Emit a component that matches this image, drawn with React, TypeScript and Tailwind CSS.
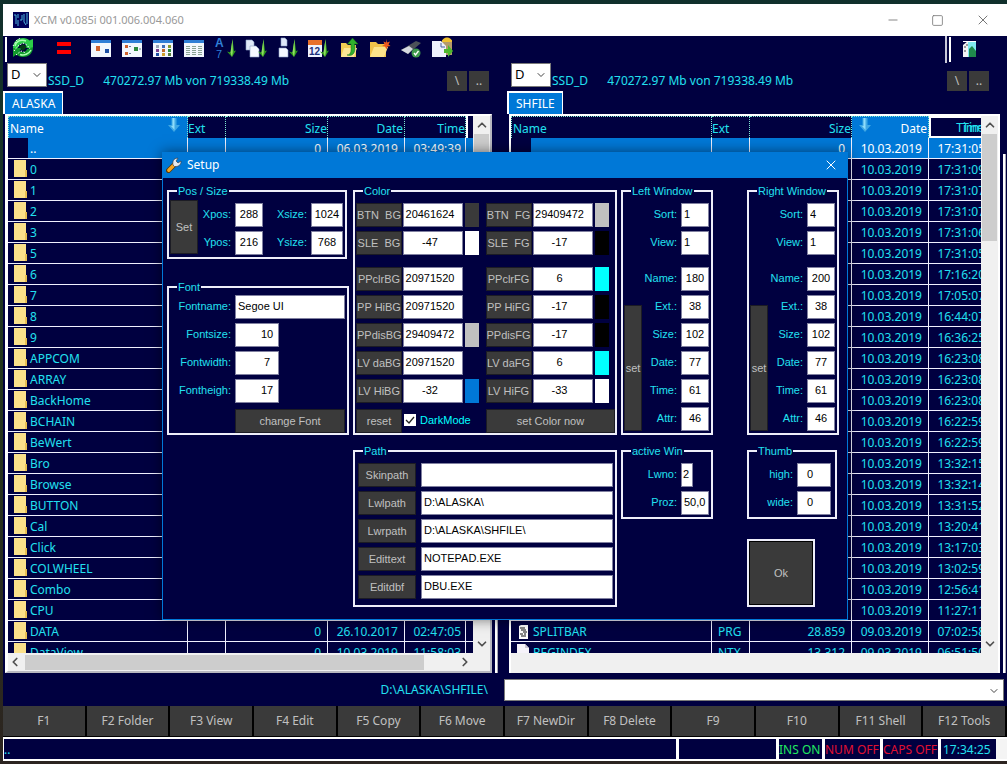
import { useId, type ReactNode } from 'react';
import { ChevronDown, ChevronLeft, ChevronRight, ChevronUp, Minus, Square, X } from 'lucide-react';

type Row = {
   icon?: 'folder' | 'prg' | 'file';
   name: string;
   ext?: string;
   size?: string;
   date?: string;
   time?: string;
};

const folder = (name: string): Row => ({ icon: 'folder', name });
const entry = (time: string): Row => ({ name: '', date: '10.03.2019', time });

const leftRows: Row[] = [
   { name: '..', size: '0', date: '06.03.2019', time: '03:49:39' },
   ...['0', '1', '2', '3', '5', '6', '7', '8', '9', 'APPCOM', 'ARRAY', 'BackHome', 'BCHAIN', 'BeWert', 'Bro',
      'Browse', 'BUTTON', 'Cal', 'Click', 'COLWHEEL', 'Combo', 'CPU'].map(folder),
   { icon: 'folder', name: 'DATA', size: '0', date: '26.10.2017', time: '02:47:05' },
   { icon: 'folder', name: 'DataView', size: '0', date: '10.03.2019', time: '11:58:03' }
];

const rightRows: Row[] = [
   { name: '', size: '0', date: '10.03.2019', time: '17:31:05' },
   ...['17:31:09', '17:31:07', '17:31:07', '17:31:06', '17:31:05', '17:16:20', '17:05:07', '16:44:07', '16:36:25',
      '16:23:08', '16:23:08', '16:23:08', '16:22:59', '16:22:59', '13:32:15', '13:32:14', '13:31:52', '13:20:41',
      '13:17:03', '13:02:59', '12:56:41', '11:27:11'].map(entry),
   { icon: 'prg', name: 'SPLITBAR', ext: 'PRG', size: '28.859', date: '09.03.2019', time: '07:02:58' },
   { icon: 'file', name: 'REGINDEX', ext: 'NTX', size: '13.312', date: '09.03.2019', time: '06:51:50' }
];

// label, value, swatch class
const colorRows = [
   [['BTN  BG', '20461624', 'bg-[#3a3a3a]'], ['BTN  FG', '29409472', 'bg-[#c0c0c0]']],
   [['SLE  BG', '-47', 'bg-white'], ['SLE  FG', '-17', 'bg-black']],
   [['PPclrBG', '20971520', ''], ['PPclrFG', '6', 'bg-[#00ffff]']],
   [['PP HiBG', '20971520', ''], ['PP HiFG', '-17', 'bg-black']],
   [['PPdisBG', '29409472', 'bg-[#c0c0c0]'], ['PPdisFG', '-17', 'bg-black']],
   [['LV daBG', '20971520', ''], ['LV daFG', '6', 'bg-[#00ffff]']],
   [['LV HiBG', '-32', 'bg-[#0078d7]'], ['LV HiFG', '-33', 'bg-white']]
];

const paths = [
   ['Skinpath', ''],
   ['Lwlpath', 'D:\\ALASKA\\'],
   ['Lwrpath', 'D:\\ALASKA\\SHFILE\\'],
   ['Edittext', 'NOTEPAD.EXE'],
   ['Editdbf', 'DBU.EXE']
];

const functionKeys = ['F1', 'F2 Folder', 'F3 View', 'F4 Edit', 'F5 Copy', 'F6 Move', 'F7 NewDir', 'F8 Delete',
   'F9', 'F10', 'F11 Shell', 'F12 Tools'];

/* ---------- icons ---------- */

const Icon = ({ children }: { children: ReactNode }) => (
   <svg width="22" height="22" viewBox="0 0 22 22">{children}</svg>
);

const SortArrow = () => (
   <>
      <path d="M18.500 2 L20 14 L22 13.500 L18 20 L13 14.500 L16.500 15.500 Z" fill="#2f9a1c" />
      <path d="M18.500 2 L18.800 15 L18 20 L16.500 15.500 Z" fill="#8fe060" />
   </>
);

const ViewFrame = ({ children }: { children: ReactNode }) => (
   <Icon>
      <rect x="1" y="3" width="20" height="17" fill="#f2f7fd" />
      <rect x="1" y="3" width="20" height="3" fill="#2f7fd6" />
      {children}
   </Icon>
);

const RefreshIcon = () => (
   <Icon>
      <path d="M1 11 C1 4 6 1 11 1 C14 1 16 2 17.500 3.500 L21 2 V11 H12 L14.500 7.500 C12 5.500 8 6 7 9 L4 13 Z" fill="#2ccc48" />
      <path d="M21 10 C21 17 16 20 11 20 C8 20 6 19 4.500 17.500 L1 20 V11 H10 L7.500 14 C10 16 14 15 15 12 Z" fill="#119a2c" />
      <path d="M3 9 C4 4 9 2 14 4 M8 17.500 C12 19 17 17 19 13" stroke="#a8ffb0" strokeWidth="1.500" fill="none" />
      <path d="M1 9 L5 3 L9 1 M2 14 L6 9 L11 6 L15 8 L18 12 M4 18 L9 14 L14 16" stroke="#fff" strokeDasharray="1.500 1.500" fill="none" />
      <path d="M7 10 L11 7 L15 10 L11 14 Z" fill="#053a14" />
   </Icon>
);

const EqualsIcon = () => (
   <Icon>
      <rect x="4" y="5" width="14" height="4" fill="#f00" />
      <rect x="4" y="13" width="14" height="4" fill="#f00" />
   </Icon>
);

const LargeIconsIcon = () => (
   <ViewFrame>
      <rect x="6" y="9" width="4" height="5" fill="#d0622c" />
      <rect x="15" y="12" width="4" height="4" fill="#1d4fa3" />
   </ViewFrame>
);

const SmallIconsIcon = () => (
   <ViewFrame>
      <rect x="4" y="8" width="3" height="3" fill="#d0622c" />
      <rect x="13" y="10" width="4" height="4" fill="#2c8a3c" />
      <rect x="4" y="15" width="3" height="3" fill="#d0622c" />
      <path d="M8 9.500h2 M18 12h2 M8 16.500h2" stroke="#6a7d96" />
   </ViewFrame>
);

const TilesIcon = () => (
   <ViewFrame>
      {['#9aa7b8', '#3f6fb8', '#8a9a2c', '#7a3f8a', '#c06a2c', '#2c8a3c', '#1d4fa3', '#d0a02c', '#5a7d3c'].map((c, i) => (
         <rect key={i} x={4 + (i % 3) * 6} y={8 + Math.floor(i / 3) * 4} width="3" height="3" fill={c} />
      ))}
   </ViewFrame>
);

const DetailsIcon = () => (
   <ViewFrame>
      {[9, 11, 13, 15, 17].map(y => (
         <path key={y} d={`M3 ${y}.500h4 M9 ${y}.500h4 M15 ${y}.500h4`} stroke="#8aa394" />
      ))}
   </ViewFrame>
);

const SortNameIcon = () => (
   <Icon>
      <text x="1" y="10" fontSize="12" fontWeight="bold" fill="#2f7fd6" fontFamily="Liberation Sans">A</text>
      <text x="2" y="21" fontSize="11" fill="#2f7fd6" fontFamily="Liberation Sans">7</text>
      <SortArrow />
   </Icon>
);

const SortExtIcon = () => (
   <Icon>
      <path d="M1 3h6l2 2v8H1z" fill="#dfe8f8" stroke="#8fa3c8" strokeWidth=".6" />
      <path d="M5 9h6l3 3v8H5z" fill="#f5f8ff" stroke="#8fa3c8" strokeWidth=".6" />
      <SortArrow />
   </Icon>
);

const SortSizeIcon = () => (
   <Icon>
      <path d="M5 1h4l2 2v6H5z" fill="#dfe8f8" stroke="#8fa3c8" strokeWidth=".6" />
      <path d="M3 11h7l2 2v7H3z" fill="#f5f8ff" stroke="#8fa3c8" strokeWidth=".6" />
      <SortArrow />
   </Icon>
);

const SortDateIcon = () => (
   <Icon>
      <rect x="1" y="3" width="14" height="17" fill="#eef3ff" />
      <rect x="1" y="3" width="14" height="5" fill="#e8702c" />
      <text x="2" y="18" fontSize="10" fontWeight="bold" fill="#1b2f7a" fontFamily="Liberation Sans">12</text>
      <SortArrow />
   </Icon>
);

const FolderUpIcon = () => (
   <Icon>
      <path d="M3 6h5l2 2h8v12H3z" fill="#f0cc54" />
      <path d="M6 11h13l-3 9H3z" fill="#fbe796" />
      <path d="M9 18 C14 18 13 12 13 7 H9.500 L14.500 1 L20 7 H16.500 C18 14 16 20 9 18 Z" fill="#2fb02c" stroke="#146a14" strokeWidth=".5" />
   </Icon>
);

const NewFolderIcon = () => (
   <Icon>
      <path d="M1 5h6l2 2h8v13H1z" fill="#f0c24a" />
      <path d="M5 10h14l-4 10H1z" fill="#fde48a" />
      <path d="M17 2l1 3.500 3-1-1.500 3 2 1.500-3 .5-1 3-1.500-3-3-.5 2.500-1.500-1-3 2.500 1z" fill="#f05a1c" />
   </Icon>
);

const DriveIcon = () => (
   <Icon>
      <path d="M1 13 L16 4 L21 6 L8 17 Z" fill="#4c5158" />
      <path d="M1 13 L9 9 L13 12 L8 17 Z" fill="#d5d9df" />
      <circle cx="16" cy="16" r="4.500" fill="#3e9a4c" />
      <path d="M14 16l1.500 2 3-4" stroke="#fff" strokeWidth="1.300" fill="none" />
   </Icon>
);

const PasteIcon = () => (
   <Icon>
      <path d="M11 3h10v15H11z" fill="#b49a6a" />
      <path d="M11 5 C11 -1 21 -1 21 5 Z" fill="#f0c030" />
      <path d="M1 4h9l5 5v11H1z" fill="#eef1fb" />
      <path d="M10 6v4h4" fill="none" stroke="#4a5f9a" />
      <path d="M13 12h4V8l5 6-5 6v-4h-4z" fill="#4db82c" />
   </Icon>
);

const ExitIcon = () => (
   <Icon>
      <path d="M4 8l5-4v16H4z" fill="#f4f4f4" />
      <path d="M6 9v2 M6 13v2 M8 7v2" stroke="#444" />
      <rect x="9" y="4" width="8" height="16" fill="#7fe9ef" />
      <path d="M10 20V12l3-3 4 5v6z" fill="#1f8a4c" />
      <path d="M4 4.500h13" stroke="#fff" />
   </Icon>
);

const SortedMark = () => (
   <svg width="14" height="16" viewBox="0 0 14 16">
      <path d="M4.500 1h5v7H13l-6 7-6-7h3.500z" fill="#3fa8e4" />
      <path d="M5.500 1h2v12L4 9h1.500z" fill="#8fdcfa" />
   </svg>
);

const WrenchIcon = () => (
   <svg width="16" height="16" viewBox="0 0 16 16">
      <path d="M2.500 13.500 L8 8" stroke="#5a3a08" strokeWidth="5" strokeLinecap="round" />
      <path d="M2.800 13.200 L8 8" stroke="#f5a623" strokeWidth="3.400" strokeLinecap="round" />
      <path d="M7 8 C6 3 9 .8 12 1.200 L10 4 L12 6 L15 4 C15.500 7 13 10 8.500 9.500 Z" fill="#e4e9ef" stroke="#39424e" strokeWidth=".7" />
   </svg>
);

const AppIcon = () => (
   <svg width="16" height="16" viewBox="0 0 16 16">
      <rect width="16" height="16" fill="#00005a" />
      <path d="M1 3h2v9 M5 2v4 M5 8v6 M7 8h2V3 M11 2v8l2 3 M14 1v11" stroke="#4fb4dc" fill="none" />
   </svg>
);

function RowIcon ({ kind }: { kind?: Row['icon'] }) {
   if (kind === 'folder') {
      return (
         <svg className="mt-px ml-1.5" width="13" height="17" viewBox="0 0 13 17">
            <path d="M0 0h12v10h1v7H0z" fill="#fbe08a" />
            <path d="M11 10h2v7h-2z" fill="#e8bf52" />
         </svg>
      );
   }
   if (kind === 'prg') {
      return (
         <svg className="mt-1 ml-2" width="9" height="14" viewBox="0 0 9 14">
            <path d="M0 1l2-1h7v14H0z" fill="#fff" />
            <path d="M1 3h5 M2 5h5 M4 7h4 M1 9h3 M5 9h2 M2 11h5" stroke="#111" />
         </svg>
      );
   }
   if (kind === 'file') {
      return (
         <svg className="mt-0.5 ml-1.5" width="12" height="16" viewBox="0 0 12 16">
            <path d="M0 0h8l4 4v12H0z" fill="#f6f3fa" />
            <path d="M8 0v4h4z" fill="#c9c4d4" />
         </svg>
      );
   }
   return null;
}

/* ---------- file panes ---------- */

const toolGroup = [
   ['Large icons', <LargeIconsIcon />], ['Small icons', <SmallIconsIcon />], ['Tiles', <TilesIcon />],
   ['Details', <DetailsIcon />], ['Sort by name', <SortNameIcon />], ['Sort by ext', <SortExtIcon />],
   ['Sort by size', <SortSizeIcon />], ['Sort by date', <SortDateIcon />], ['Folder up', <FolderUpIcon />],
   ['New folder', <NewFolderIcon />], ['Drive', <DriveIcon />], ['Paste', <PasteIcon />]
] as const;

function ToolButton ({ title, children }: { title: string; children: ReactNode }) {
   return (
      <button aria-label={title} className="flex justify-center items-start w-[31px] h-[25px]">{children}</button>
   );
}

function Toolbar () {
   return (
      <div className="flex items-center h-[27px] shrink-0 pl-0.5">
         <div className="bg-white w-0.5 h-[25px]" />
         <ToolButton title="Refresh"><RefreshIcon /></ToolButton>
         <div className="ml-2.5"><ToolButton title="Compare"><EqualsIcon /></ToolButton></div>
         <div className="flex ml-1.5">
            {toolGroup.map(([title, icon]) => <ToolButton key={title} title={title}>{icon}</ToolButton>)}
         </div>
         <div className="bg-[#c8c8d8] ml-auto w-0.5 h-[27px]" />
         <div className="bg-white mr-[3px] ml-0.5 w-0.5 h-[25px]" />
         <div className="mr-[22px]"><ToolButton title="Exit"><ExitIcon /></ToolButton></div>
      </div>
   );
}

function DriveBar () {
   return (
      <div className="flex h-7 shrink-0 pl-1 pr-[18px]">
         <div className="relative w-10 h-6">
            <select aria-label="Drive" className="bg-white pl-[3px] border border-[#7a7a7a] w-full h-full text-black text-[13px] appearance-none">
               <option>D</option>
            </select>
            <ChevronDown size={12} className="top-1.5 right-1 absolute text-[#444] pointer-events-none" />
         </div>
         <p className="mt-2 ml-px leading-5"><span className="mr-4">SSD_D</span> 470272.97 Mb von 719338.49 Mb</p>
         <button className="bg-[#3a3a3a] mt-2 ml-auto w-5 h-5 text-[#c0c0c0]">\</button>
         <button className="bg-[#3a3a3a] mt-2 ml-0.5 w-5 h-5 text-[#c0c0c0]">..</button>
      </div>
   );
}

function VScroll ({ thumb }: { thumb: string }) {
   return (
      <div className="flex flex-col bg-[#f0f0f0] w-[17px] text-[#505050] shrink-0">
         <ChevronUp size={14} strokeWidth={3} className="mx-auto my-0.5 shrink-0" />
         <div className={`bg-[#cdcdcd] mx-px ${thumb}`} />
         <ChevronDown size={14} strokeWidth={3} className="mx-auto mt-auto mb-0.5 shrink-0" />
      </div>
   );
}

function FileTable ({ rows, nameCol, sorted }: { rows: Row[]; nameCol: string; sorted: 'name' | 'date' }) {
   const head = 'h-[22px] p-0 pt-[3px] font-normal leading-4 border-r border-dotted border-[#7fe8d0] overflow-hidden';
   const active = 'bg-[#0078d7] text-white';
   const cell = 'h-[21px] p-0 border-r border-b border-[#f0f0ff] leading-[19px] overflow-hidden whitespace-nowrap';

   return (
      <table className="border-separate border-spacing-0 w-[524px] table-fixed">
         <colgroup>
            <col className={nameCol} />
            <col className="w-[38px]" />
            <col className="w-[102px]" />
            <col className="w-[77px]" />
            <col className="w-[61px]" />
            <col />
         </colgroup>
         <thead>
            <tr>
               <th className={`${head} border-t border-l text-left ${sorted === 'name' ? active : ''}`}>
                  <div className="flex justify-between h-4 pl-px">
                     Name
                     {sorted === 'name' && <span className="mr-1.5 -mt-1"><SortedMark /></span>}
                  </div>
               </th>
               <th className={`${head} border-t text-left`}>Ext</th>
               <th className={`${head} border-t text-right`}>Size</th>
               <th className={`${head} border-t text-right ${sorted === 'date' ? active : ''}`}>
                  <div className="flex justify-end h-4 pr-px">
                     {sorted === 'date' && <span className="mr-auto ml-1.5 -mt-1"><SortedMark /></span>}
                     Date
                  </div>
               </th>
               {sorted === 'date' ? (
                  <th className="relative p-0 pt-0.5 border-2 border-white h-[22px] font-normal text-right leading-4">
                     <span className="pr-1">Time</span>
                     {/* the focused column paints its caption twice */}
                     <span className="top-0.5 -right-0.5 absolute">Time</span>
                  </th>
               ) : (
                  <th className={`${head} border-t text-right`}>Time</th>
               )}
               <th className="p-0 border-white border-l-2" />
            </tr>
         </thead>
         <tbody>
            {rows.map((row, i) => {
               const tone = i === 0 ? 'bg-[#0078d7] text-white' : '';
               return (
                  <tr key={i}>
                     <td className={`${cell} ${tone}`}>
                        <div className="flex items-start h-5">
                           <span className="flex bg-[#000040] w-5 h-5 shrink-0"><RowIcon kind={row.icon} /></span>
                           <span className="pt-px pl-0.5">{row.name}</span>
                        </div>
                     </td>
                     <td className={`${cell} ${tone} pt-px pl-1.5`}>{row.ext}</td>
                     <td className={`${cell} ${tone} pt-px pr-1.5 text-right`}>{row.size}</td>
                     <td className={`${cell} ${tone} pt-px pr-1.5 text-right`}>{row.date}</td>
                     <td className={`${cell} ${tone} pt-px pr-1 text-right`}>{row.time}</td>
                     <td className={`${cell} ${tone}`} />
                  </tr>
               );
            })}
         </tbody>
      </table>
   );
}

function Pane ({ tab, children }: { tab: string; children: ReactNode }) {
   return (
      <section className="flex flex-col min-w-0 min-h-0">
         <DriveBar />
         <div className="flex h-[23px] shrink-0">
            <button className="bg-[#0078d7] px-[7px] border-white border-t-2 border-r border-l-2 text-white">{tab}</button>
         </div>
         <div className="flex flex-1 min-h-0">{children}</div>
      </section>
   );
}

const Splitter = () => <div className="bg-[#a8a8b4] mt-10 border-white border-l-2 w-[3px]" />;

/* ---------- setup dialog ---------- */

const grayButton = 'bg-[#3a3a3a] border border-[#1c1c24] text-[#c0c0c0] whitespace-pre';
const inputBase = 'bg-white border border-[#8080a0] h-6 pb-0.5 text-black outline-none shrink-0';

function Group ({ title, className = '', children }: { title: string; className?: string; children: ReactNode }) {
   return (
      <fieldset className={`border-2 border-[#eeeefa] min-w-0 ${className}`}>
         <legend className="ml-2 px-px leading-[14px]">{title}</legend>
         {children}
      </fieldset>
   );
}

function Field ({ label, value, input, row = '' }: { label: string; value: string; input: string; row?: string }) {
   const id = useId();
   return (
      <div className={`flex justify-end items-center h-6 ${row}`}>
         <label htmlFor={id} className="mr-1 pb-0.5">{label}</label>
         <input id={id} defaultValue={value} className={`${inputBase} ${input}`} />
      </div>
   );
}

function WindowGroup ({ title, sort, name }: { title: string; sort: string; name: string }) {
   return (
      <Group title={title}>
         <div className="flex justify-between pt-[5px] pr-0.5 pb-0.5 pl-px">
            <button className={`${grayButton} self-end w-[18px] h-[126px]`}>set</button>
            <div className="flex flex-col gap-1">
               <Field label="Sort:" value={sort} input="w-7 pl-0.5" />
               <Field label="View:" value="1" input="w-7 pl-0.5" />
               <Field label="Name:" value={name} input="w-7 text-center" row="mt-2" />
               <Field label="Ext.:" value="38" input="w-7 text-center" />
               <Field label="Size:" value="102" input="w-7 text-center" />
               <Field label="Date:" value="77" input="w-7 text-center" />
               <Field label="Time:" value="61" input="w-7 text-center" />
               <Field label="Attr:" value="46" input="w-7 text-center" />
            </div>
         </div>
      </Group>
   );
}

function ColorGroup () {
   return (
      <Group title="Color">
         <div className="flex flex-col gap-1 pt-[5px] pl-px">
            {colorRows.map((pair, i) => (
               <div key={i} className={`flex h-6 ${i === 2 ? 'mt-2' : ''}`}>
                  {pair.map(([label, value, swatch]) => (
                     <div key={label} className="flex w-[130px]">
                        <button className={`${grayButton} w-[46px]`}>{label}</button>
                        <input aria-label={label} defaultValue={value} className={`${inputBase} ml-px w-[60px] pr-1.5 text-center`} />
                        <span className={`ml-0.5 w-3.5 ${swatch}`} />
                     </div>
                  ))}
               </div>
            ))}
            <div className="flex mt-0.5 h-6">
               <button className={`${grayButton} w-[46px]`}>reset</button>
               <label className="flex items-center gap-1 pb-0.5 pl-0.5 w-[84px] text-[#00ffff]">
                  <span className="relative w-3 h-3">
                     <input type="checkbox" defaultChecked className="block bg-white w-3 h-3 appearance-none" />
                     <svg className="top-0 left-0 absolute pointer-events-none" width="12" height="12" viewBox="0 0 12 12">
                        <path d="M2 6l3 3 5-6" stroke="#222" strokeWidth="1.300" fill="none" />
                     </svg>
                  </span>
                  DarkMode
               </label>
               <button className={`${grayButton} flex-1`}>set Color now</button>
            </div>
         </div>
      </Group>
   );
}

function SetupDialog () {
   return (
      <div role="dialog" aria-label="Setup" className="top-[148px] left-1/2 absolute bg-[#000040] shadow-[0_0_12px_rgba(0,0,0,0.5)] border border-[#0078d7] w-[686px] h-[468px] font-['Liberation_Sans',sans-serif] text-[#22e0f0] text-[11px] -translate-x-1/2">
         <header className="flex items-center bg-[#0078d7] pr-2 pb-0.5 pl-[3px] h-[25px] font-['Noto_Sans',sans-serif] text-white text-[12px]">
            <WrenchIcon />
            <h2 className="ml-[5px]">Setup</h2>
            <button aria-label="Close" className="ml-auto"><X size={16} strokeWidth={1.5} /></button>
         </header>

         <div className="flex gap-1 pt-[6px] pl-1">
            <div className="flex flex-col gap-[21px] w-[182px]">
               <Group title="Pos / Size" className="w-[180px]">
                  <div className="flex pb-0.5 pl-px">
                     <button className={`${grayButton} mt-0.5 w-7 h-[54px]`}>Set</button>
                     <div className="flex flex-col flex-1 gap-1 pt-[5px]">
                        <Field label="Xpos:" value="288" input="w-7 text-center" />
                        <Field label="Ypos:" value="216" input="w-7 text-center" />
                     </div>
                     <div className="flex flex-col gap-1 pt-[5px] pr-0.5 w-[82px]">
                        <Field label="Xsize:" value="1024" input="w-8 text-center" />
                        <Field label="Ysize:" value="768" input="w-8 text-center" />
                     </div>
                  </div>
               </Group>
               <Group title="Font">
                  <div className="flex flex-col gap-1 pt-px pr-0.5">
                     <Field label="Fontname:" value="Segoe UI" input="w-[110px] pl-0.5" />
                     <Field label="Fontsize:" value="10" input="w-11 mr-[66px] pl-5 text-center" />
                     <Field label="Fontwidth:" value="7" input="w-11 mr-[66px] pl-5 text-center" />
                     <Field label="Fontheigh:" value="17" input="w-11 mr-[66px] pl-5 text-center" />
                     <button className={`${grayButton} self-end mt-0.5 w-[110px] h-6`}>change Font</button>
                  </div>
               </Group>
            </div>

            <div className="flex flex-col gap-[9px] w-[264px]">
               <ColorGroup />
               <Group title="Path">
                  <div className="flex flex-col gap-1 pt-[5px] pr-0.5 pb-1.5 pl-[3px]">
                     {paths.map(([label, value]) => (
                        <div key={label} className="flex justify-between">
                           <button className={`${grayButton} w-[58px]`}>{label}</button>
                           <input aria-label={label} defaultValue={value} className={`${inputBase} w-48 pl-0.5`} />
                        </div>
                     ))}
                  </div>
               </Group>
            </div>

            <div className="flex flex-col gap-[9px] w-[92px]">
               <WindowGroup title="Left Window" sort="1" name="180" />
               <Group title="active Win">
                  <div className="flex flex-col gap-1 pt-[5px] pr-0.5 pb-0.5">
                     <Field label="Lwno:" value="2" input="w-3 mr-4 pl-px" />
                     <Field label="Proz:" value="50,0" input="w-7 pl-0.5" />
                  </div>
               </Group>
            </div>

            <div className="flex flex-col gap-[9px] ml-[30px] w-[92px]">
               <WindowGroup title="Right Window" sort="4" name="200" />
               <Group title="Thumb" className="w-[90px]">
                  <div className="flex flex-col gap-1 pt-[5px] pr-1 pb-0.5">
                     <Field label="high:" value="0" input="w-[34px] pr-2 text-center" />
                     <Field label="wide:" value="0" input="w-[34px] pr-2 text-center" />
                  </div>
               </Group>
               <button className="bg-[#3a3a3a] mt-[11px] border-2 border-[#eeeefa] outline-1 outline-black -outline-offset-3 w-[68px] h-[68px] text-[#c0c0c0]">Ok</button>
            </div>
         </div>
      </div>
   );
}

/* ---------- page ---------- */

export default function App () {
   return (
      <div className="bg-linear-to-b from-[#10302c] via-[#24351c] to-[#2c2420] pt-1 pb-[3px] pl-[3px] h-screen min-h-[600px] overflow-hidden font-['Noto_Sans',sans-serif] text-[#22e0f0] text-[12px]">
         <div className="relative flex flex-col bg-[#000040] h-full">
            <header className="flex items-center bg-white pl-2.5 h-8 text-[#999] shrink-0">
               <AppIcon />
               <h1 className="ml-[5px] text-[11px]">XCM v0.085i 001.006.004.060</h1>
               <div className="flex gap-[31px] ml-auto mr-4 text-[#777]">
                  <button aria-label="Minimize"><Minus size={14} strokeWidth={1.5} /></button>
                  <button aria-label="Maximize"><Square size={13} strokeWidth={1.5} /></button>
                  <button aria-label="Close"><X size={16} strokeWidth={1.5} /></button>
               </div>
            </header>
            <Toolbar />

            <main className="flex-1 grid grid-cols-[504fr_500fr] grid-rows-[minmax(0,1fr)] min-h-0">
               <Pane tab="ALASKA">
                  <div className="flex flex-col flex-1 ml-0.5 border-t-2 border-r-2 border-b-2 border-l-[3px] border-white border-r-[#b8b8c0] border-b-[#b8b8c0] min-w-0">
                     <div className="flex flex-1 min-h-0">
                        <div className="flex-1 overflow-hidden">
                           <FileTable rows={leftRows} nameCol="w-[180px]" sorted="name" />
                        </div>
                        <VScroll thumb="h-32" />
                     </div>
                     <div className="flex items-center bg-[#f0f0f0] h-[18px] text-[#505050] shrink-0">
                        <ChevronLeft size={14} strokeWidth={3} className="mr-[3px]" />
                        <div className="bg-[#cdcdcd] w-[399px] h-[15px]" />
                        <ChevronRight size={14} strokeWidth={3} className="mr-[18px] ml-auto" />
                     </div>
                  </div>
                  <div className="flex mr-[9px] ml-[3px]"><Splitter /></div>
               </Pane>
               <Pane tab="SHFILE">
                  <div className="flex flex-col flex-1 ml-0.5 border-white border-t-2 border-r-2 border-l-2 min-w-0">
                     <div className="flex flex-1 min-h-0">
                        <div className="flex-1 overflow-hidden">
                           <FileTable rows={rightRows} nameCol="w-[201px]" sorted="date" />
                        </div>
                        <VScroll thumb="h-[107px]" />
                     </div>
                     <div className="bg-[#f0f0f0] h-5 shrink-0" />
                  </div>
                  <div className="flex mr-px ml-[3px]"><Splitter /></div>
               </Pane>
            </main>

            <div className="flex items-center h-[33px] shrink-0 pr-[3px]">
               <label htmlFor="cmd" className="pr-4 w-[501px] text-right">{'D:\\ALASKA\\SHFILE\\'}</label>
               <div className="relative flex-1 h-[22px]">
                  <select id="cmd" className="bg-white border border-[#7a7a7a] w-full h-full text-black appearance-none">
                     <option> </option>
                  </select>
                  <ChevronDown size={12} className="top-1.5 right-1 absolute text-[#444] pointer-events-none" />
               </div>
            </div>

            <nav className="grid grid-cols-12 bg-black border-white border-b-2 h-[33px] shrink-0">
               {functionKeys.map(key => (
                  <button key={key} className="bg-[#3a3a3a] mr-0.5 mb-px text-[#c0c0c0]">{key}</button>
               ))}
            </nav>

            <footer className="flex border-white border-b-2 border-l h-[22px] leading-[22px] whitespace-nowrap shrink-0">
               <span className="flex-1">..</span>
               <span className="border-white border-l-[3px] w-[100px]" />
               <span className="border-white border-l-[3px] w-[46px] overflow-hidden text-[#20e860]">INS ON</span>
               <span className="border-white border-l-[3px] w-[58px] overflow-hidden text-[#e01030]">NUM OFF</span>
               <span className="border-white border-l-[3px] w-[58px] overflow-hidden text-[#e01030]">CAPS OFF</span>
               <span className="pl-0.5 border-white border-l-[3px] w-[58px] overflow-hidden">17:34:25</span>
               <span className="bg-[#f4f4f4] w-[11px]" />
            </footer>

            <SetupDialog />
         </div>
      </div>
   );
}
